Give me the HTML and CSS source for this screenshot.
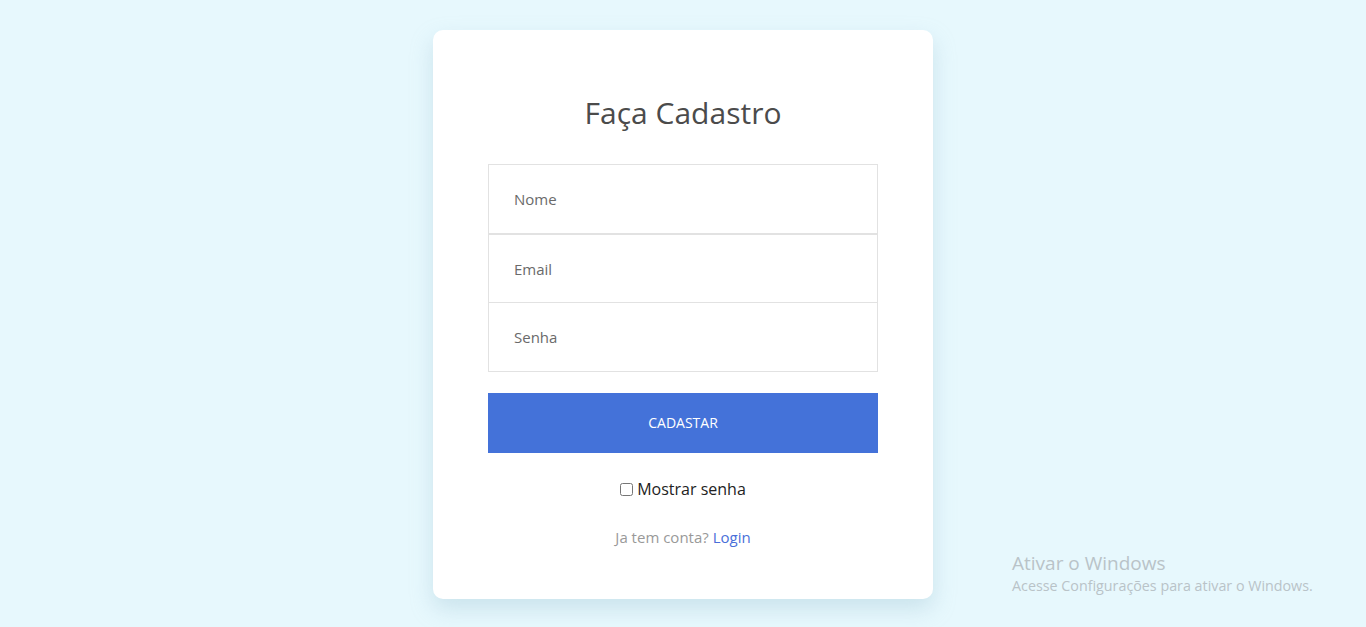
FILE: index.html
```html
<!DOCTYPE html>
<html lang="pt-BR">
<head>
<meta charset="utf-8">
<title>Faça Cadastro</title>
<link rel="stylesheet" href="styles.css">
</head>
<body>
<main class="page">
  <form class="card">
    <h1 class="title">Faça Cadastro</h1>
    <div class="fields">
      <input class="field field-first" type="text" placeholder="Nome">
      <input class="field field-second" type="email" placeholder="Email">
      <input class="field field-third" type="password" placeholder="Senha">
    </div>
    <button class="submit" type="button">CADASTAR</button>
    <label class="show"><input class="check" type="checkbox"> Mostrar senha</label>
    <p class="account">Ja tem conta? <a class="link" href="#">Login</a></p>
  </form>
</main>
<div class="watermark">
  <div class="wm-title">Ativar o Windows</div>
  <div class="wm-sub">Acesse Configurações para ativar o Windows.</div>
</div>
</body>
</html>
```
FILE: styles.css
```css
* { box-sizing: border-box; }
html, body { margin: 0; height: 100%; }
body {
  background: #e7f8fd;
  font-family: "Open Sans", "Noto Sans", sans-serif;
  overflow: hidden;
}
.page {
  display: flex;
  justify-content: center;
  padding-top: 30px;
}
.card {
  width: 500px;
  background: #fff;
  border-radius: 10px;
  box-shadow: 0 10px 22px rgba(150, 190, 205, 0.35);
  padding: 63px 55px 52px;
  display: flex;
  flex-direction: column;
  align-items: stretch;
}
.title {
  margin: 0;
  font-size: 30px;
  line-height: 40px;
  font-weight: 400;
  color: #4b4b4b;
  text-align: center;
}
.fields {
  margin-top: 31px;
  display: flex;
  flex-direction: column;
}
.field {
  display: block;
  width: 100%;
  height: 70px;
  border: 1px solid #e2e2e2;
  padding: 0 25px;
  font-family: "Open Sans", "Noto Sans", sans-serif;
  font-size: 15px;
  color: #333;
  outline: none;
  background: #fff;
  margin: 0;
}
.field::placeholder { color: #6a6a6a; }
.field-second { height: 69px; }
.field-third { height: 69px; border-top: 0; }
.submit {
  margin-top: 21px;
  height: 60px;
  border: 0;
  padding: 0 0 2px;
  background: #4472d9;
  color: #fff;
  font-family: "Open Sans", "Noto Sans", sans-serif;
  font-size: 14px;
  cursor: pointer;
}
.show {
  margin-top: 25px;
  display: flex;
  justify-content: center;
  align-items: center;
  gap: 4px;
  font-size: 16px;
  line-height: 22px;
  color: #222;
}
.check {
  margin: 0;
  width: 13px;
  height: 13px;
}
.account {
  margin: 27px 0 0;
  text-align: center;
  font-size: 15px;
  line-height: 20px;
  color: #999;
}
.link { color: #4a6fd9; text-decoration: none; }
.watermark {
  position: absolute;
  left: 1012px;
  top: 550px;
  font-family: "Open Sans", "Noto Sans", sans-serif;
  color: #b9c3c8;
}
.wm-title { font-size: 19px; line-height: 26px; }
.wm-sub { font-size: 14.3px; line-height: 20px; }
```
